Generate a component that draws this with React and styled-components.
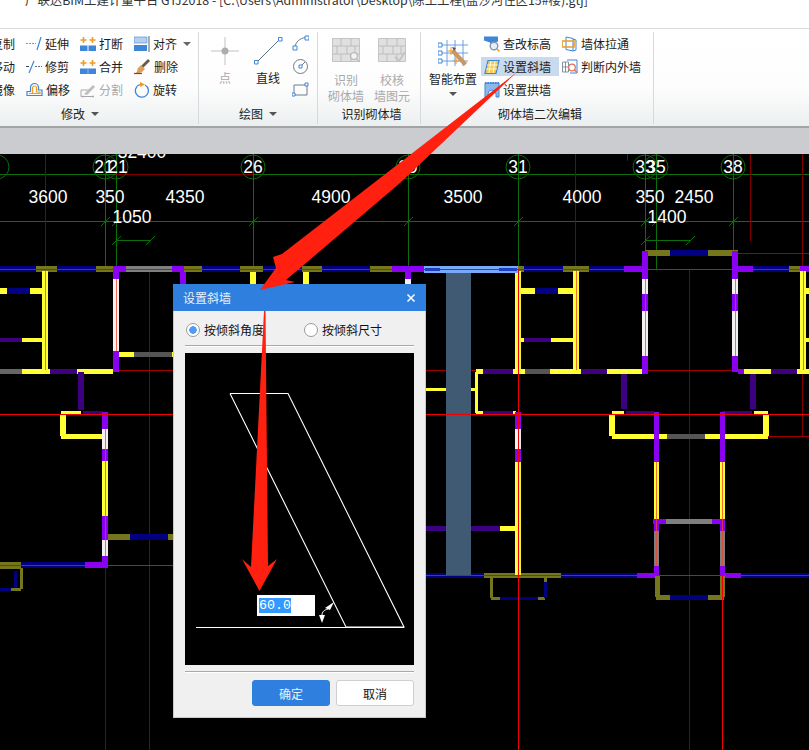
import React from 'react';
import styled, { createGlobalStyle } from 'styled-components';

const GlobalStyle = createGlobalStyle`
  html, body { margin: 0; padding: 0; background: #fff; }
  body { font-family: "Noto Sans CJK SC", "Liberation Sans", sans-serif; font-size: 12px; }
`;

const Page = styled.div`
  position: relative;
  width: 809px;
  height: 750px;
  overflow: hidden;
  display: flex;
  flex-direction: column;
`;

const TitleBar = styled.div`
  height: 28px;
  flex: none;
  overflow: hidden;
  padding-left: 25px;
  color: #333;
  font-size: 12.4px;
  line-height: 14px;
  white-space: nowrap;
  span { display: block; margin-top: -7px; }
`;

const Ribbon = styled.div`
  height: 97px;
  flex: none;
  display: flex;
  border-top: 1px solid #d9d9d9;
  border-bottom: 2px solid #a2a4a6;
  background: linear-gradient(#fff 0%, #fdfdfd 60%, #eceff0 100%);
`;

const Group = styled.div`
  width: ${p => p.$w}px;
  flex: none;
  box-sizing: border-box;
  display: flex;
  flex-direction: column;
  margin: 3px 0 2px;
  border-right: 1px solid #d7dadc;
`;

const ToolArea = styled.div`
  flex: 1;
  display: flex;
  gap: ${p => p.$gap || 0}px;
  padding-left: ${p => p.$left || 0}px;
`;

const GroupLabel = styled.div`
  height: 20px;
  display: flex;
  justify-content: center;
  align-items: center;
  gap: 6px;
  padding-left: ${p => p.$shiftRight || 0}px;
  padding-right: ${p => p.$shiftLeft || 0}px;
  color: #222;
  line-height: 20px;
`;

const Caret = styled.i`
  width: 0;
  height: 0;
  display: block;
  margin-left: ${p => p.$ml || 0}px;
  margin-top: ${p => p.$mt || 0}px;
  border-left: 4px solid transparent;
  border-right: 4px solid transparent;
  border-top: 4px solid ${p => p.$c || '#555'};
`;

const ToolCol = styled.div`
  width: ${p => p.$w}px;
  flex: none;
  display: flex;
  flex-direction: column;
  margin-left: ${p => p.$ml || 0}px;
`;

const SmallTool = styled.div`
  height: 19px;
  margin: 2px 0;
  padding: 0 3px;
  display: flex;
  align-items: center;
  gap: 3px;
  white-space: nowrap;
  color: ${p => (p.$off ? '#a9a9a9' : '#1c1c1c')};
  background: ${p => (p.$on ? '#c9d9ee' : 'transparent')};
  svg { flex: none; }
`;

const BigTool = styled.div`
  width: ${p => p.$w}px;
  flex: none;
  display: flex;
  flex-direction: column;
  align-items: center;
  padding-top: ${p => p.$top}px;
  color: ${p => (p.$off ? '#a9a9a9' : '#1c1c1c')};
  line-height: 16px;
  text-align: center;
`;

const BigLabel = styled.div`
  margin-top: ${p => p.$gap}px;
  white-space: nowrap;
`;

const Band = styled.div`
  height: 26px;
  flex: none;
  background: #cacccf;
`;

const Canvas = styled.div`
  position: relative;
  flex: 1;
  background: #000;
  overflow: hidden;
  svg { display: block; }
`;

const Dialog = styled.div`
  position: absolute;
  left: 173px;
  top: 130px;
  width: 253px;
  height: 434px;
  box-sizing: border-box;
  background: #f0f0f0;
  border: 1px solid #c5c9cc;
  border-top: 0;
  display: flex;
  flex-direction: column;
`;

const DialogHead = styled.div`
  height: 27px;
  flex: none;
  margin: 0 -1px;
  padding: 0 10px;
  display: flex;
  align-items: center;
  justify-content: space-between;
  background: #2f7fdf;
  color: #e8f1fc;
`;

const DialogBody = styled.div`
  flex: 1;
  padding: 0 11px;
  display: flex;
  flex-direction: column;
`;

const RadioRow = styled.div`
  height: 35px;
  flex: none;
  display: flex;
  align-items: center;
  box-sizing: border-box;
  padding: 3px 0 0 1px;
  border-bottom: 1px solid #a9a9a9;
  box-shadow: 0 1px 0 #fff;
`;

const RadioItem = styled.div`
  width: 118px;
  flex: none;
  display: flex;
  align-items: center;
  gap: 4px;
  color: #111;
  white-space: nowrap;
`;

const RadioDot = styled.i`
  width: 14px;
  height: 14px;
  box-sizing: border-box;
  display: block;
  border-radius: 50%;
  border: 1px solid #9a9a9a;
  background: ${p => (p.$on ? 'radial-gradient(circle, #4f9bf5 0 3.5px, #fff 4px)' : '#fff')};
`;

const Preview = styled.div`
  position: relative;
  height: 312px;
  flex: none;
  margin-top: 7px;
  background: #000;
  svg { display: block; }
`;

const AngleInput = styled.div`
  position: absolute;
  left: 72px;
  top: 242px;
  width: 58px;
  height: 21px;
  box-sizing: border-box;
  padding-left: 2px;
  display: flex;
  align-items: center;
  background: #fff;
  span {
    background: #3399ff;
    color: #fff;
    font-family: "Liberation Mono", monospace;
    font-size: 13.3px;
    line-height: 15px;
  }
`;

const DialogFoot = styled.div`
  margin-top: 6px;
  padding-top: 8px;
  display: flex;
  justify-content: flex-end;
  gap: 6px;
  border-top: 1px solid #a9a9a9;
  box-shadow: inset 0 1px 0 #fff;
`;

const DialogButton = styled.div`
  width: 78px;
  height: 26px;
  box-sizing: border-box;
  display: flex;
  align-items: center;
  justify-content: center;
  border-radius: 3px;
  border: 1px solid ${p => (p.$primary ? '#2f7fdf' : '#cfcfcf')};
  background: ${p => (p.$primary ? '#2f7fdf' : '#fff')};
  color: ${p => (p.$primary ? '#e8f1fc' : '#111')};
`;

const ArrowLayer = styled.svg`
  position: absolute;
  left: 0;
  top: 0;
  pointer-events: none;
`;

const B = '#3f86d8';
const O = '#f09a24';
const G = '#a8a8a8';

const Ico = ({ children, s = 16, h }) => (
  <svg width={s} height={h || s} viewBox={`0 0 ${s} ${h || s}`} fill="none">{children}</svg>
);

const icons = {
  extend: <Ico><path d="M0 7.5h10" stroke="#8a96a6" strokeDasharray="2 1" /><path d="M11 14L15 1" stroke={B} strokeWidth="1.2" /></Ico>,
  trim: <Ico><path d="M0 7.5h3" stroke="#33485f" /><path d="M3 14L8 2" stroke={B} strokeWidth="1.2" /><path d="M9 7.5h7" stroke="#5b6b80" strokeDasharray="2 1" /></Ico>,
  offset: <Ico s={17}><path d="M1 14.5v-4h3.5v-4a4 4 0 0 1 8 0v2.5h3.5v5.500z" stroke={B} strokeWidth="1.2" /><path d="M3 12.500h3.500V7a2 2 0 0 1 4 0v4H14v1.500z" stroke={O} strokeWidth="1.2" /></Ico>,
  breakIt: <Ico><path d="M3.500 1v6M.5 4h6M12.500 1v6M9.500 4h6" stroke={O} strokeWidth="1.6" /><path d="M0 9.500h7.500V15H0zM8.500 9.500H16V15H8.500z" fill={B} /></Ico>,
  merge: <Ico><path d="M3.500 1v6M.5 4h6M12.500 1v6M9.500 4h6" stroke={O} strokeWidth="1.6" /><path d="M0 9.500h16V15H0z" fill={B} /><path d="M8 9.500V15" stroke="#8db8ea" /></Ico>,
  split: <Ico><path d="M1 14.500V8h9M1 14.500h13" stroke={G} /><path d="M4 12l9-9 2 2-8 8z" fill="#bdbdbd" /><path d="M3 15.500v-2M13 15.500v-2" stroke={G} /></Ico>,
  align: <Ico><path d="M0 1h13v6H0z" fill="#b4cff0" stroke={B} strokeWidth=".6" /><path d="M0 9h13v6H0z" fill={B} /><path d="M15 0v16" stroke="#58616d" /></Ico>,
  erase: <Ico s={17}><path d="M7 8l7-7 2 2-7 7z" fill="#6b5a4a" /><path d="M4 10l3-3 4 4-3 3c-1 1-4 1-6 1 2-2 1-4 2-5z" fill="#d8a25a" /><path d="M0 15.500h8" stroke="#b32a1c" strokeWidth="1.200" /></Ico>,
  rotate: <Ico><path d="M6 2.500a6.500 6.500 0 1 0 5 .500" stroke={B} strokeWidth="1.300" /><path d="M6 0l5 2.500L6 5z" fill={O} /></Ico>,
  arc: <Ico s={17}><path d="M3 13C3 7 8 3 14 2.500" stroke="#6e7b8a" /><path d="M1 11h4v4H1zM13 1h4v4h-4z" fill="#fff" stroke={B} /></Ico>,
  circle: <Ico s={17}><circle cx="8.500" cy="8.500" r="7" stroke="#6e7b8a" /><path d="M8.500 8.500L13 4" stroke="#6e7b8a" /><path d="M7 7h3v3H7z" fill="#fff" stroke={B} /></Ico>,
  rect: <Ico s={17}><path d="M2 4h13v10H2z" stroke="#6e7b8a" /><path d="M0 12h3v3H0zM13 2h3v3h-3z" fill="#fff" stroke={B} /></Ico>,
  height: <Ico><path d="M0 .5h14v5l-3 1v1H6v-1l-6-2z" fill={B} /><circle cx="10" cy="10" r="3.800" fill="#e8eef5" stroke="#8496ab" strokeWidth="1.400" /><path d="M13 13l2.500 2.500" stroke={O} strokeWidth="1.500" /></Ico>,
  slant: <Ico><path d="M4 1.500h11l-3 13H1z" fill="#f4cd4e" stroke={B} strokeWidth="1.200" /><path d="M3 6h11M2 10h11M7 2L5 14M11 2L9 14" stroke="#fff" strokeWidth=".8" /></Ico>,
  arch: <Ico><path d="M1 15V1h14v14h-3v-3a4 4 0 0 0-8 0v3z" fill="#8db8ea" stroke={B} /><path d="M1 1h14" stroke={B} strokeWidth="2" strokeDasharray="1.500 1" /></Ico>,
  pull: <Ico><path d="M4 1l7 1.500V15l-7-1.500z" stroke={B} strokeWidth="1" /><path d="M11 3l3 1v10l-3 1" stroke={B} /><path d="M0 5h12v6H0z" stroke={O} strokeWidth="1.600" /></Ico>,
  judge: <Ico><path d="M.5 3h6v10h-6zM.5 8h6M3.500 3v10" stroke="#7f90a5" /><path d="M5 1h10v13H8" stroke={B} /><circle cx="10" cy="8.500" r="3.300" fill="#fff" stroke="#e8705a" strokeWidth="1.300" /><path d="M12.500 11l2.500 2.500" stroke="#e8705a" strokeWidth="1.400" /></Ico>,
};

const PointIcon = () => (
  <Ico s={30}>
    <path d="M15 1v28M1 15h28" stroke="#c2c2c2" />
    <circle cx="15" cy="15" r="3.500" fill="#adadad" />
  </Ico>
);

const LineIcon = () => (
  <Ico s={30}>
    <path d="M3 27L27 3" stroke="#5e6f84" />
    <path d="M1.500 24.500h3.500v3.500H1.500zM25.500 1.500H29V5h-3.500z" fill="#fff" stroke={B} />
  </Ico>
);

const BrickIcon = ({ check }) => (
  <Ico s={28} h={26}>
    <path d="M.5 .5h27v23H.5z" fill="#e0e0e0" stroke="#c4c4c4" />
    <path d="M1 8h26M1 16h26M9 1v7M19 1v7M5 8v8M15 8v8M23 8v8M9 16v8M19 16v8" stroke="#bdbdbd" />
    {check
      ? <path d="M17 19l4 4 6-9" stroke="#c4c4c4" strokeWidth="2" />
      : <g><circle cx="22" cy="18" r="3.500" fill="#f2f2f2" stroke="#aaa" /><path d="M24.500 21l3 3" stroke="#aaa" /></g>}
  </Ico>
);

const SmartIcon = () => (
  <Ico s={30}>
    <path d="M9 2v26M17 2v26M25 2v26M3 7h27M3 15h27M3 23h27" stroke="#6aa0e0" />
    <path d="M0 5h4v4H0zM0 13h4v4H0zM0 21h4v4H0z" fill="#fff" stroke={B} />
    <path d="M13 9v8M9 13h8M18 20v6M15 23h6" stroke={O} />
    <path d="M16 11l13 14-3 3-13-14z" fill="#c99766" />
    <path d="M14 9l4 1-2 3z" fill="#555" />
  </Ico>
);

const Small = ({ icon, children, on, off }) => (
  <SmallTool $on={on} $off={off}>{icons[icon]}{children}</SmallTool>
);

// colours of the CAD drawing
const Y = '#ffff33';
const P = '#8a00f0';
const D = '#3c0080';
const N = '#000080';
const L = '#76761c';
const A = '#7f7f7f';
const W = '#f4f0f0';

// [y, width, [x1, x2, colour]...]
const hWalls = [
  [268, 6, [[0, 36, N], [36, 57, L], [57, 96, N], [96, 113, L], [113, 126, P], [126, 172, A], [172, 184, P], [184, 202, L], [202, 240, N], [240, 263, L], [263, 302, N], [302, 322, L], [322, 370, N], [370, 392, L], [392, 424, P], [518, 524, L], [524, 563, N], [563, 589, L], [589, 624, N], [624, 648, P], [735, 753, P], [753, 789, N], [789, 800, L], [800, 809, P]]],
  [252, 6, [[645, 670, L], [670, 708, N], [708, 738, L]]],
  [290, 6, [[0, 7, Y], [7, 30, N], [30, 43, Y], [521, 535, Y], [535, 558, N], [558, 574, Y], [805, 809, Y]]],
  [339, 4, [[0, 22, D], [22, 43, Y], [521, 524, Y], [524, 551, D], [551, 574, Y], [805, 809, Y]]],
  [353, 5, [[119, 134, Y], [134, 172, '#555'], [172, 173, Y]]],
  [370, 5, [[0, 22, '#666'], [22, 50, Y], [50, 77, D], [77, 113, Y], [476, 483, Y], [483, 513, D], [513, 525, Y], [525, 550, '#555'], [550, 581, Y], [581, 607, D], [607, 642, Y], [642, 648, P], [738, 744, P], [744, 771, Y], [771, 797, D], [797, 809, Y]]],
  [388, 3, [[426, 476, Y]]],
  [411, 3, [[83, 103, D]]],
  [412, 4, [[61, 81, Y], [476, 483, Y], [483, 513, D], [513, 516, Y], [612, 624, Y], [626, 654, D], [722, 752, D], [754, 768, Y]]],
  [435, 5, [[61, 103, Y], [612, 654, Y], [659, 667, Y], [667, 705, '#555'], [705, 720, Y], [725, 768, Y]]],
  [527, 5, [[426, 500, D], [500, 516, Y]]],
  [536, 6, [[108, 130, L], [130, 168, N], [168, 173, L]]],
  [564, 6, [[0, 21, L], [21, 85, N], [85, 108, P]]],
  [567, 2, [[0, 21, L]]],
  [520, 5, [[653, 666, P], [666, 712, A], [712, 725, P]]],
  [574, 5, [[426, 484, N], [484, 561, L], [561, 637, N], [637, 655, P], [722, 741, P], [741, 809, N]]],
  [588, 3, [[0, 11, N], [11, 21, L]]],
  [597, 3, [[491, 500, L], [500, 538, N], [538, 545, L]]],
  [596, 5, [[656, 670, L], [670, 708, N], [708, 724, L]]],
];

// [x, width, [y1, y2, colour]...]
const vWalls = [
  [45, 6, [[270, 369, Y]]],
  [116, 6, [[270, 278, P], [278, 350, W], [350, 371, P]]],
  [183, 6, [[271, 283, P]]],
  [253, 6, [[271, 283, Y]]],
  [306, 6, [[271, 283, Y]]],
  [408, 6, [[271, 278, P], [278, 283, W]]],
  [81, 6, [[371, 409, D]]],
  [63, 6, [[413, 435, Y]]],
  [105, 6, [[411, 428, P], [428, 448, W], [448, 460, P], [460, 515, Y], [515, 539, P], [539, 555, W], [555, 567, P]]],
  [21, 3, [[567, 588, L]]],
  [15, 3, [[570, 587, N]]],
  [518, 6, [[270, 369, Y], [411, 428, P], [428, 448, W], [448, 461, P], [461, 574, Y]]],
  [576, 6, [[270, 369, Y]]],
  [645, 6, [[250, 278, P], [278, 293, W], [293, 310, P], [310, 355, W], [355, 371, P]]],
  [735, 6, [[250, 278, P], [278, 293, W], [293, 310, P], [310, 355, W], [355, 371, P]]],
  [803, 6, [[270, 369, Y]]],
  [476, 3, [[371, 412, Y]]],
  [624, 6, [[373, 408, D]]],
  [753, 6, [[373, 408, D]]],
  [612, 6, [[413, 435, Y]]],
  [766, 6, [[413, 435, Y]]],
  [656, 5, [[411, 461, P], [461, 518, Y], [518, 530, P], [530, 565, A], [565, 574, P]]],
  [722, 5, [[411, 461, P], [461, 518, Y], [518, 530, P], [530, 565, A], [565, 574, P]]],
  [657, 5, [[574, 596, L]]],
  [722, 5, [[574, 596, L]]],
  [491, 3, [[577, 597, L]]],
  [545, 3, [[577, 581, L], [581, 597, N]]],
];

const dims = [
  ['3600', 48, 202], ['350', 110, 202], ['4350', 185, 202], ['4900', 331, 202], ['3500', 463, 202],
  ['4000', 582, 202], ['350', 650, 202], ['2450', 694, 202], ['1050', 132, 222], ['1400', 667, 222],
  ['32400', 142, 157],
];

const axes = [
  [-3, ''], [105, '21'], [116, '21'], [253, '26'], [408, '29'], [518, '31'], [645, '33'], [656, '35'], [733, '38'],
];

const greenC = '#0a6e0a';

const Drawing = () => (
  <svg width="809" height="597" viewBox="0 153 809 597">
    <g shapeRendering="crispEdges">
      {/* grid lines */}
      <path d="M0 173.500H809M0 220.500H809M116 239.500H150M645 239.500H690" stroke={greenC} />
      <path d="M105.500 153V268M116.500 153V268M253.500 153V268M408.500 153V268M518.500 153V268M645.500 153V252M656.500 153V268M733.500 153V252" stroke={greenC} />
      <path d="M116 173.500H253" stroke="#800000" />
      <path d="M45.500 153V267M575.500 153V267M750.500 153V240M802.500 153V435M627.500 153V160M149.500 268V750M689.500 268V750M105.500 565V750" stroke="#800000" />
      <path d="M0 369.500H809" stroke="#a00000" />
      <path d="M660 435.500H809M735 252.500H809" stroke="#a00000" />

      {/* walls */}
      {hWalls.flatMap(([y, w, runs]) => runs.map(([a, b, c]) => (
        <rect key={`h${y}-${a}`} x={a} y={y - w / 2} width={b - a} height={w} fill={c} />
      )))}
      {vWalls.flatMap(([x, w, runs]) => runs.map(([a, b, c]) => (
        <rect key={`v${x}-${a}`} x={x - w / 2} y={a} width={w} height={b - a} fill={c} />
      )))}

      {/* wall centre lines */}
      <path d="M45.500 270V369M105.500 428V555M116.500 278V350M518.500 270V369M518.500 428V574M576.500 270V369M645.500 278V355M735.500 278V355M803.500 270V369M656.500 461V565M722.500 461V565" stroke="#f0402a" strokeOpacity=".75" />

      {/* picked wall and its slab */}
      <rect x="446" y="272" width="25" height="303" fill="#415a74" />
      <rect x="424" y="265" width="94" height="7" fill="#78a8f8" />
      <rect x="425" y="267" width="15" height="3" fill="#1b3cc0" />
      <rect x="499" y="267" width="18" height="3" fill="#1b3cc0" />

      <path d="M0 268.500H809M0 413.500H809M0 564.500H173M426 574.500H809M518.500 268V750M722.500 575V750" stroke="#f00000" />
    </g>

    {axes.map(([x, t]) => (
      <g key={x}>
        <circle cx={x} cy="166" r="12" fill="none" stroke={greenC} />
        <text x={x + (x === 105 ? -1 : x === 116 ? 2 : 0)} y="172" fill="#fff" textAnchor="middle" fontFamily="Liberation Sans, sans-serif" fontSize="17.500">{t}</text>
      </g>
    ))}
    {[105, 116, 253, 408, 518, 645, 656, 733].map(x => (
      <path key={x} d={`M${x - 4} 225L${x + 5} 216`} stroke={greenC} />
    ))}
    <path d="M112 244L121 235M146 244L155 235M641 244L650 235M686 244L695 235" stroke={greenC} />
    {dims.map(([t, x, y]) => (
      <text key={t + x} x={x} y={y} fill="#fff" textAnchor="middle" fontFamily="Liberation Sans, sans-serif" fontSize="17.500">{t}</text>
    ))}
  </svg>
);

const SlantSketch = () => (
  <svg width="229" height="312" viewBox="0 0 229 312" fill="none">
    <path d="M45 40.500H103L219 274L161 274L45 40.500M11 274.500H219" stroke="#fff" strokeWidth="1.100" />
    <path d="M137 262C137 259 139 257 143 256" stroke="#fff" />
    <path d="M134 262h6l-3 8zM140 255l9-6-4 8z" fill="#fff" />
  </svg>
);

const Arrows = () => (
  <ArrowLayer width="809" height="750" viewBox="0 0 809 750">
    <path d="M517 72L282 254L273 257L276 268L260 290L295 282L286 280L400 183z" fill="#ff2010" />
    <path d="M264 311H265.500L268 566L277 559L259.500 591L242 559L251 567z" fill="#ff2010" />
  </ArrowLayer>
);

export default function App() {
  return (
    <Page>
      <GlobalStyle />
      <TitleBar>
        <span>广联达BIM土建计量平台 GTJ2018 - [C:\Users\Administrator\Desktop\陈土工程(盐沙河住区15#楼).gtj]</span>
      </TitleBar>

      <Ribbon>
        <Group $w={199}>
          <ToolArea>
            <ToolCol $w={35} $ml={-12}>
              <SmallTool>复制</SmallTool>
              <SmallTool>移动</SmallTool>
              <SmallTool>镜像</SmallTool>
            </ToolCol>
            <ToolCol $w={54}>
              <Small icon="extend">延伸</Small>
              <Small icon="trim">修剪</Small>
              <Small icon="offset">偏移</Small>
            </ToolCol>
            <ToolCol $w={54}>
              <Small icon="breakIt">打断</Small>
              <Small icon="merge">合并</Small>
              <Small icon="split" off>分割</Small>
            </ToolCol>
            <ToolCol $w={60}>
              <Small icon="align">对齐<Caret $c="#666" $ml={3} /></Small>
              <Small icon="erase">删除</Small>
              <Small icon="rotate">旋转</Small>
            </ToolCol>
          </ToolArea>
          <GroupLabel $shiftLeft={38}>修改<Caret /></GroupLabel>
        </Group>

        <Group $w={119}>
          <ToolArea $left={10} $gap={11}>
            <BigTool $w={32} $top={4} $off><PointIcon /><BigLabel $gap={4}>点</BigLabel></BigTool>
            <BigTool $w={32} $top={4}><LineIcon /><BigLabel $gap={4}>直线</BigLabel></BigTool>
            <ToolCol $w={17} $ml={-6}>
              <SmallTool>{icons.arc}</SmallTool>
              <SmallTool>{icons.circle}</SmallTool>
              <SmallTool>{icons.rect}</SmallTool>
            </ToolCol>
          </ToolArea>
          <GroupLabel>绘图<Caret /></GroupLabel>
        </Group>

        <Group $w={103}>
          <ToolArea $left={7} $gap={4}>
            <BigTool $w={42} $top={6} $off><BrickIcon /><BigLabel $gap={8}>识别<br />砌体墙</BigLabel></BigTool>
            <BigTool $w={42} $top={6} $off><BrickIcon check /><BigLabel $gap={8}>校核<br />墙图元</BigLabel></BigTool>
          </ToolArea>
          <GroupLabel $shiftRight={5}>识别砌体墙</GroupLabel>
        </Group>

        <Group $w={233}>
          <ToolArea $left={8} $gap={4}>
            <BigTool $w={48} $top={6}><SmartIcon /><BigLabel $gap={3}>智能布置</BigLabel><Caret $mt={5} /></BigTool>
            <ToolCol $w={78}>
              <Small icon="height">查改标高</Small>
              <Small icon="slant" on>设置斜墙</Small>
              <Small icon="arch">设置拱墙</Small>
            </ToolCol>
            <ToolCol $w={85} $ml={-4}>
              <Small icon="pull">墙体拉通</Small>
              <Small icon="judge">判断内外墙</Small>
            </ToolCol>
          </ToolArea>
          <GroupLabel $shiftRight={6}>砌体墙二次编辑</GroupLabel>
        </Group>
      </Ribbon>

      <Band />

      <Canvas>
        <Drawing />
        <Dialog>
          <DialogHead>
            设置斜墙
            <svg width="10" height="10" viewBox="0 0 10 10"><path d="M1.500 1.500l7 7M8.500 1.500l-7 7" stroke="#fff" strokeWidth="1.500" /></svg>
          </DialogHead>
          <DialogBody>
            <RadioRow>
              <RadioItem><RadioDot $on />按倾斜角度</RadioItem>
              <RadioItem><RadioDot />按倾斜尺寸</RadioItem>
            </RadioRow>
            <Preview>
              <SlantSketch />
              <AngleInput><span>60.0</span></AngleInput>
            </Preview>
            <DialogFoot>
              <DialogButton $primary>确定</DialogButton>
              <DialogButton>取消</DialogButton>
            </DialogFoot>
          </DialogBody>
        </Dialog>
      </Canvas>

      <Arrows />
    </Page>
  );
}
